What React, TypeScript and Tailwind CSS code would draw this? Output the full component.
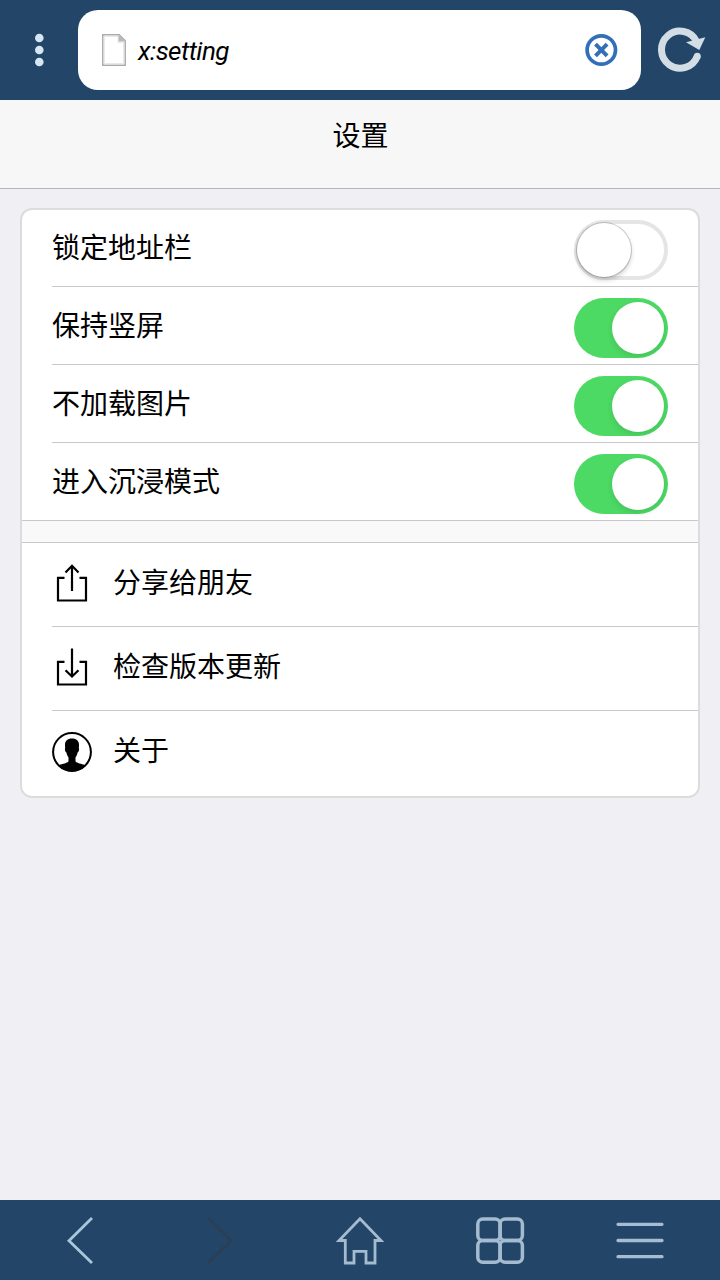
import type { ReactNode } from 'react';

const cjk = "font-['Noto_Sans_CJK_SC',sans-serif]";

function Toggle({ on }: { on: boolean }) {
  return on ? (
    <span className="flex h-[60px] w-[94px] shrink-0 items-center justify-end rounded-full bg-[#4cd964] pr-1">
      <span className="h-[52px] w-[52px] rounded-full bg-white shadow-[0_3px_6px_rgba(0,0,0,0.1)]" />
    </span>
  ) : (
    <span className="flex h-[60px] w-[94px] shrink-0 items-center rounded-full border-4 border-[#e5e5e5] bg-white">
      <span className="-ml-[1px] h-[54px] w-[54px] shrink-0 rounded-full bg-white shadow-[0_0_0_1px_rgba(0,0,0,0.18),0_3px_5px_rgba(0,0,0,0.2)]" />
    </span>
  );
}

const settings = [
  { label: '锁定地址栏', on: false },
  { label: '保持竖屏', on: true },
  { label: '不加载图片', on: true },
  { label: '进入沉浸模式', on: true },
];

function ShareIcon() {
  return (
    <svg width="40" height="40" viewBox="0 0 40 40" fill="none" stroke="#000" strokeWidth="2.2">
      <path d="M12.500 13.800H6v22.700h28V13.800h-6.500M20 27V2M13.500 8.500L20 1.800l6.500 6.700" />
    </svg>
  );
}

function DownloadIcon() {
  return (
    <svg width="40" height="40" viewBox="0 0 40 40" fill="none" stroke="#000" strokeWidth="2.2">
      <path d="M12.500 13.800H6v22.700h28V13.800h-6.500M20 0.500v28M13.500 22.200L20 28.500l6.500-6.300" />
    </svg>
  );
}

function PersonIcon() {
  return (
    <svg width="40" height="40" viewBox="0 0 40 40">
      <circle cx="20" cy="20" r="18.900" fill="#fff" stroke="#000" strokeWidth="2" />
      <path d="M20 6.500c-4.800 0-7.300 2.700-7 7.300l.2 2.200c-.8 1 0 3.800 1.200 4.400.4 2 1.200 3.700 2.100 4.900v4c-1.200 2.300-7.400 2.400-10.500 4.400A19.500 19.500 0 0 0 20 39.500a19.500 19.500 0 0 0 14-5.800c-3.100-2-9.300-2.100-10.500-4.400v-4c.9-1.200 1.700-2.900 2.100-4.900 1.200-.6 2-3.400 1.200-4.400l.2-2.200c.3-4.600-2.200-7.300-7-7.300z" />
    </svg>
  );
}

const actions: { label: string; icon: ReactNode }[] = [
  { label: '分享给朋友', icon: <ShareIcon /> },
  { label: '检查版本更新', icon: <DownloadIcon /> },
  { label: '关于', icon: <PersonIcon /> },
];

function AddressBar() {
  return (
    <header className="flex h-[100px] shrink-0 items-center bg-[#234668]">
      <button className="flex w-[78px] justify-center" aria-label="Menu">
        <svg width="10" height="34" viewBox="0 0 10 34" fill="#d5e7f3">
          <circle cx="5.300" cy="5" r="4.300" />
          <circle cx="5.300" cy="17" r="4.300" />
          <circle cx="5.300" cy="29" r="4.300" />
        </svg>
      </button>
      <div className="flex h-20 w-[563px] items-center rounded-[20px] bg-white pr-[23px] pl-6">
        <svg width="24" height="32" viewBox="0 0 24 32">
          <path d="M.8.8h16.400l6 6v24.400H.8z" fill="#fff" stroke="#aaa" strokeWidth="1.500" />
          <path d="M2.300 2.300h14v6h5.400v21.400H2.300z" fill="none" stroke="#e8e8e8" strokeWidth="1.200" />
          <path d="M16.500.5v7H24z" fill="#b9b9b9" />
        </svg>
        <span className="ml-3 flex-1 pt-[2px] font-[Roboto,sans-serif] text-[26px] leading-8 tracking-[-0.55px] italic text-black">x:setting</span>
        <svg width="34" height="34" viewBox="0 0 34 34" fill="none" stroke="#336eb8">
          <circle cx="17.300" cy="17" r="14.200" strokeWidth="3.700" />
          <path d="M11.500 11.200l11.600 11.600M23.100 11.200l-11.600 11.600" strokeWidth="4" />
        </svg>
      </div>
      <button className="ml-4 flex" aria-label="Reload">
        <svg width="50" height="46" viewBox="0 0 50 46">
          <path d="M40.300 29.200A18.500 18.500 0 1 1 39.600 14.500" fill="none" stroke="#d3dde5" strokeWidth="7" />
          <circle cx="40.300" cy="29.200" r="3.500" fill="#d3dde5" />
          <path d="M29 15.200L48.300 10.200L42.300 23z" fill="#d3dde5" />
        </svg>
      </button>
    </header>
  );
}

function BottomBar() {
  return (
    <nav className="flex h-20 shrink-0 items-center justify-around bg-[#234668] px-[10px]">
      <svg width="60" height="60" viewBox="0 0 60 60" fill="none" stroke="#a9c7db" strokeWidth="2.800">
        <path d="M42 8L19 30.700L42 53" />
      </svg>
      <svg width="60" height="60" viewBox="0 0 60 60" fill="none" stroke="#2b3e54" strokeWidth="2.800">
        <path d="M18 8l23 22.700L18 53" />
      </svg>
      <svg width="60" height="60" viewBox="0 0 60 60" fill="none" stroke="#a5bbd0" strokeWidth="2.800">
        <path d="M30 8.800L9 30.500H15.300V53H24V41.300h12V53h9V30.500h6z" />
      </svg>
      <svg width="60" height="60" viewBox="0 0 60 60" fill="none" stroke="#a5bbd0" strokeWidth="3.500">
        <rect x="7.800" y="9" width="22.300" height="21.600" rx="5" />
        <rect x="30.100" y="9" width="22.300" height="21.600" rx="5" />
        <rect x="7.800" y="30.600" width="22.300" height="21.600" rx="5" />
        <rect x="30.100" y="30.600" width="22.300" height="21.600" rx="5" />
      </svg>
      <svg width="60" height="60" viewBox="0 0 60 60" fill="none" stroke="#a4bdd2" strokeWidth="3.300" strokeLinecap="round">
        <path d="M8 14.300h44M8 30.500h44M8 46.700h44" />
      </svg>
    </nav>
  );
}

export default function App() {
  return (
    <div className={`flex h-[1280px] w-[720px] flex-col overflow-hidden bg-[#efeff4] text-[28px] text-black ${cjk}`}>
      <AddressBar />
      <h1 className="flex h-[89px] shrink-0 justify-center border-b border-[#b5b5b8] bg-[#f7f7f7] pt-[14px] pl-px leading-10">设置</h1>
      <main className="flex-1 px-5 pt-[19px]">
        <section className="h-[590px] overflow-hidden rounded-xl border-2 border-[#dcdcdc] bg-white">
          <ul>
            {settings.map((item, index) => (
              <li key={item.label} className={index === settings.length - 1 ? 'border-b border-[#c8c7cc]' : 'ml-[30px] border-b border-[#c8c7cc]'}>
                <div className={`flex items-center justify-between pr-[30px] ${index === 0 ? 'h-[76px] pt-1' : 'h-[77px] pt-[5px]'} ${index === settings.length - 1 ? 'pl-[30px]' : ''}`}>
                  <span className="-mt-[8px] leading-10">{item.label}</span>
                  <Toggle on={item.on} />
                </div>
              </li>
            ))}
          </ul>
          <div className="h-[22px] border-b border-[#c8c7cc] bg-[#f9f9f9]" />
          <ul>
            {actions.map((item, index) => (
              <li key={item.label} className={`ml-[30px] flex h-[84px] items-center pb-[2px] ${index < actions.length - 1 ? 'border-b border-[#c8c7cc]' : ''}`}>
                {item.icon}
                <span className="-mt-[6px] ml-[21px] leading-10">{item.label}</span>
              </li>
            ))}
          </ul>
        </section>
      </main>
      <BottomBar />
    </div>
  );
}
